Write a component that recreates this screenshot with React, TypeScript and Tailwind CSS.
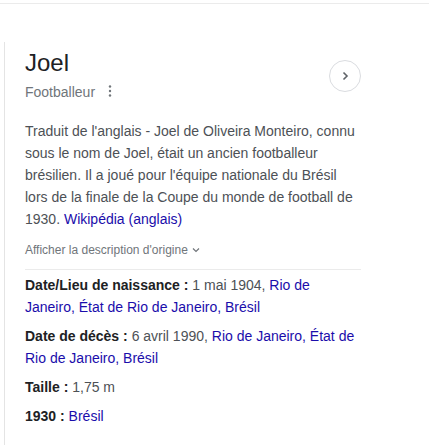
import React from "react";

const facts = [
  {
    label: "Date/Lieu de naissance",
    parts: [
      { text: "1 mai 1904, ", link: false },
      { text: "Rio de Janeiro, État de Rio de Janeiro, Brésil", link: true },
    ],
  },
  {
    label: "Date de décès",
    parts: [
      { text: "6 avril 1990, ", link: false },
      { text: "Rio de Janeiro, État de Rio de Janeiro, Brésil", link: true },
    ],
  },
  {
    label: "Taille",
    parts: [{ text: "1,75 m", link: false }],
  },
  {
    label: "1930",
    parts: [{ text: "Brésil", link: true }],
  },
];

const App: React.FC = () => {
  return (
    <div
      className="w-[429px] h-[445px] bg-white overflow-hidden pt-[3px]"
      style={{ fontFamily: '"Liberation Sans", Arial, sans-serif' }}
    >
      <div className="h-px bg-[#ebebeb]" />
      <div className="mt-[38px] ml-[4px] w-[372px] border-l border-[#e4e4e4] pl-[20px] pt-[7px] h-[420px]">
        <div className="w-[336px] flex items-center justify-between">
          <div>
            <h2 className="text-[24px] leading-[28px] text-[#202124]">Joel</h2>
            <div className="mt-[5px] flex items-center text-[14px] leading-[20px] text-[#70757a]">
              <span>Footballeur</span>
              <svg width="4" height="12" viewBox="0 0 4 12" className="ml-[13px] mb-[2px]">
                <circle cx="2" cy="1.5" r="1.2" fill="#70757a" />
                <circle cx="2" cy="6" r="1.2" fill="#70757a" />
                <circle cx="2" cy="10.5" r="1.2" fill="#70757a" />
              </svg>
            </div>
          </div>
          <button className="w-[32px] h-[32px] rounded-full border border-[#dadce0] flex items-center justify-center mt-[1px]">
            <svg width="12" height="12" viewBox="0 0 12 12">
              <path d="M4.5 2.5 L8 6 L4.5 9.5" fill="none" stroke="#5f6368" strokeWidth="1.6" />
            </svg>
          </button>
        </div>

        <p className="w-[336px] mt-[18px] text-[14px] leading-[22px] text-[#4d5156]">
          Traduit de l'anglais - Joel de Oliveira Monteiro, connu sous le nom de Joel, était un
          ancien footballeur brésilien. Il a joué pour l'équipe nationale du Brésil lors de la
          finale de la Coupe du monde de football de 1930.{" "}
          <a className="text-[#1a0dab]">Wikipédia (anglais)</a>
        </p>

        <div className="mt-[12px] flex items-center text-[12px] leading-[16px] text-[#70757a]">
          <span>Afficher la description d'origine</span>
          <svg width="10" height="10" viewBox="0 0 10 10" className="ml-[3px]">
            <path d="M2 3.5 L5 6.5 L8 3.5" fill="none" stroke="#70757a" strokeWidth="1.2" />
          </svg>
        </div>

        <div className="w-[336px] h-px bg-[#ebebeb] mt-[11px]" />

        <div className="w-[336px] mt-[4px] flex flex-col gap-[7px]">
          {facts.map((f, i) => (
            <div key={i} className="text-[14px] leading-[22px] text-[#4d5156]">
              <span className="font-bold text-[#202124]">{f.label} : </span>
              {f.parts.map((p, j) =>
                p.link ? (
                  <a key={j} className="text-[#1a0dab]">
                    {p.text}
                  </a>
                ) : (
                  <span key={j}>{p.text}</span>
                )
              )}
            </div>
          ))}
        </div>
      </div>
    </div>
  );
};

export default App;
